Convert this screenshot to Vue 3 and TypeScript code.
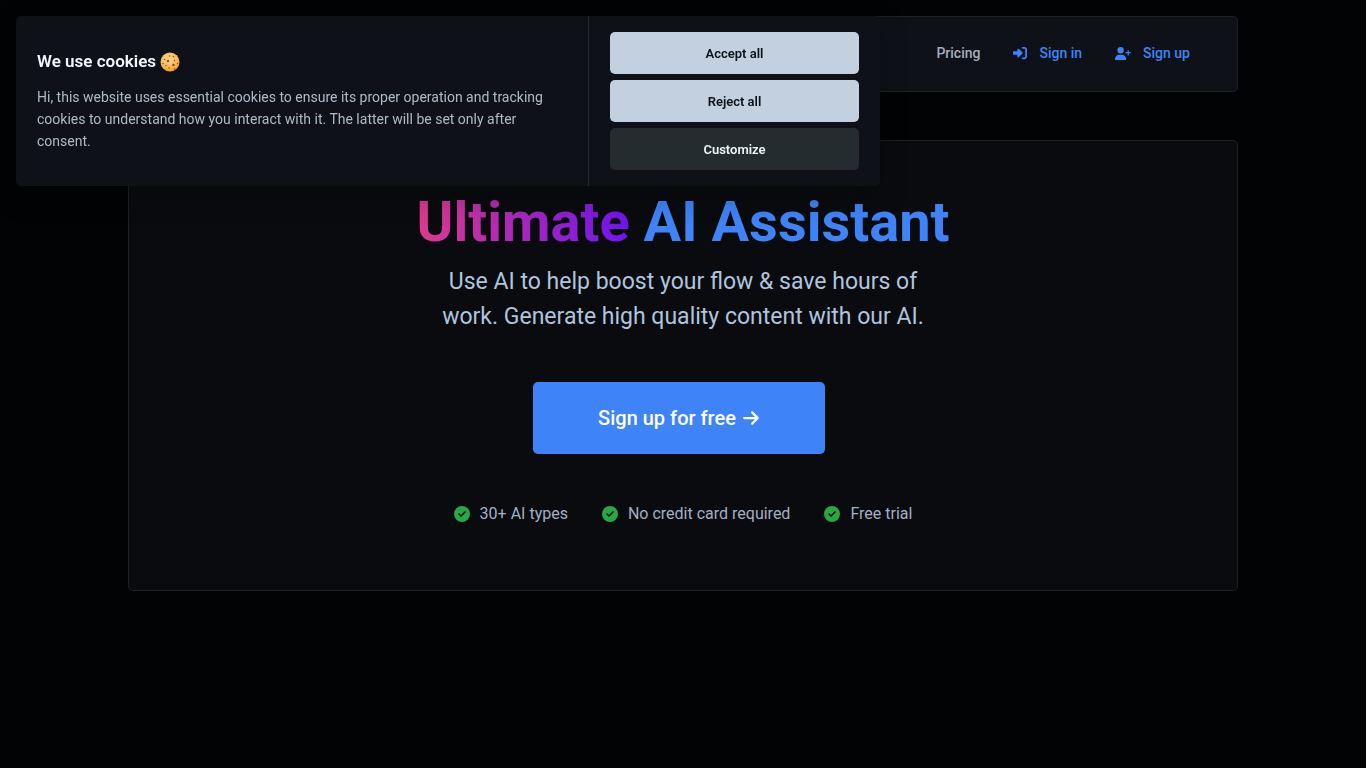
<script setup lang="ts">
import { ref } from 'vue'

const showConsent = ref(true)
const features: string[] = ['30+ AI types', 'No credit card required', 'Free trial']

function closeConsent(): void {
  showConsent.value = false
}
</script>

<template>
  <div class="page">
    <header class="navbar">
      <nav class="nav-links" aria-label="Main">
        <a class="nav-link" href="#pricing">Pricing</a>
        <a class="nav-link accent" href="#login">
          <svg class="icon-in" viewBox="0 0 512 512" aria-hidden="true">
            <path d="M217.9 105.9L340.7 228.7c7.2 7.2 11.3 17.1 11.3 27.3s-4.1 20.1-11.3 27.3L217.9 406.1c-6.4 6.4-15 9.9-24 9.9c-18.7 0-33.9-15.2-33.9-33.9l0-62.1L32 320c-17.7 0-32-14.3-32-32l0-64c0-17.7 14.3-32 32-32l128 0 0-62.1c0-18.7 15.2-33.9 33.9-33.9c9 0 17.6 3.6 24 9.9zM352 416l64 0c17.7 0 32-14.3 32-32l0-256c0-17.7-14.3-32-32-32l-64 0c-17.7 0-32-14.3-32-32s14.3-32 32-32l64 0c53 0 96 43 96 96l0 256c0 53-43 96-96 96l-64 0c-17.7 0-32-14.3-32-32s14.3-32 32-32z" />
          </svg>
          Sign in
        </a>
        <a class="nav-link accent" href="#register">
          <svg class="icon-up" viewBox="0 0 640 512" aria-hidden="true">
            <path d="M96 128a128 128 0 1 1 256 0A128 128 0 1 1 96 128zM0 482.3C0 383.8 79.8 304 178.3 304l91.4 0C368.2 304 448 383.8 448 482.3c0 16.4-13.3 29.7-29.7 29.7L29.7 512C13.3 512 0 498.7 0 482.3zM504 312l0-64-64 0c-13.3 0-24-10.7-24-24s10.7-24 24-24l64 0 0-64c0-13.3 10.7-24 24-24s24 10.7 24 24l0 64 64 0c13.3 0 24 10.7 24 24s-10.7 24-24 24l-64 0 0 64c0 13.3-10.7 24-24 24s-24-10.7-24-24z" />
          </svg>
          Sign up
        </a>
      </nav>
    </header>

    <main class="hero">
      <h1 class="title"><span class="gradient">Ultimate</span> AI Assistant</h1>
      <p class="subtitle">Use AI to help boost your flow &amp; save hours of work. Generate high quality content with our AI.</p>
      <a class="cta" href="#register">
        Sign up for free
        <svg viewBox="0 0 448 512" aria-hidden="true">
          <path d="M438.6 278.6c12.5-12.5 12.5-32.8 0-45.3l-160-160c-12.5-12.5-32.8-12.5-45.3 0s-12.5 32.8 0 45.3L338.8 224 32 224c-17.7 0-32 14.3-32 32s14.3 32 32 32l306.7 0L233.4 393.4c-12.5 12.5-12.5 32.8 0 45.3s32.8 12.5 45.3 0l160-160z" />
        </svg>
      </a>
      <ul class="features">
        <li v-for="feature in features" :key="feature">
          <svg viewBox="0 0 512 512" aria-hidden="true">
            <path d="M256 512A256 256 0 1 0 256 0a256 256 0 1 0 0 512zM369 209L241 337c-9.4 9.4-24.6 9.4-33.9 0l-64-64c-9.4-9.4-9.4-24.6 0-33.9s24.6-9.4 33.9 0l47 47L335 175c9.4-9.4 24.6-9.4 33.9 0s9.4 24.6 0 33.9z" />
          </svg>
          {{ feature }}
        </li>
      </ul>
    </main>

    <section v-if="showConsent" class="consent" role="dialog" aria-labelledby="consent-title">
      <div class="consent-text">
        <h2 id="consent-title">
          We use cookies
          <svg viewBox="0 0 40 40" role="img" aria-label="cookie">
            <defs>
              <radialGradient id="dough" cx="45%" cy="35%" r="65%">
                <stop offset="0" stop-color="#ffd587" />
                <stop offset="0.65" stop-color="#fcbc58" />
                <stop offset="1" stop-color="#ee9a3c" />
              </radialGradient>
            </defs>
            <circle cx="20" cy="20" r="19" fill="url(#dough)" />
            <g fill="#9a4a20">
              <circle cx="19" cy="8" r="1.5" />
              <circle cx="27" cy="9" r="1.5" />
              <circle cx="9" cy="15" r="1.5" />
              <circle cx="16" cy="18" r="2.5" />
              <circle cx="29" cy="17" r="1.5" />
              <circle cx="6" cy="23" r="1.5" />
              <circle cx="12" cy="27" r="1.5" />
              <circle cx="27" cy="26" r="2.5" />
              <circle cx="35" cy="23" r="1.5" />
              <circle cx="18" cy="32" r="1.5" />
              <circle cx="29" cy="34" r="1.5" />
            </g>
          </svg>
        </h2>
        <p>Hi, this website uses essential cookies to ensure its proper operation and tracking cookies to understand how you interact with it. The latter will be set only after consent.</p>
      </div>
      <div class="consent-actions">
        <button type="button" @click="closeConsent">Accept all</button>
        <button type="button" @click="closeConsent">Reject all</button>
        <button type="button" class="secondary">Customize</button>
      </div>
    </section>
  </div>
</template>

<style>
body {
  background: #020305;
}
</style>

<style scoped>
.page {
  box-sizing: border-box;
  max-width: 1142px;
  margin: 0 auto;
  padding: 16px;
  font-family: Roboto, "Liberation Sans", sans-serif;
  color: #b0c4de;
}

.navbar {
  display: flex;
  justify-content: flex-end;
  box-sizing: border-box;
  min-height: 76px;
  padding: 24px 47px;
  background: #0e1218;
  border: 1px solid #1d2124;
  border-radius: 5px;
}

.nav-links {
  display: flex;
  gap: 33px;
  height: 24px;
}

.nav-link {
  display: flex;
  align-items: center;
  color: #a6adba;
  font-size: 14px;
  font-weight: 500;
  line-height: 24px;
  text-decoration: none;
}

.accent {
  color: #3e83f7;
}

.nav-link svg {
  fill: currentColor;
  margin-right: 12px;
}

.icon-in {
  width: 14px;
  height: 14px;
}

.icon-up {
  width: 16px;
  height: 13px;
}

.hero {
  display: flex;
  flex-direction: column;
  align-items: center;
  margin-top: 48px;
  padding: 47px 48px 64px;
  background: #090b0f;
  border: 1px solid #1d2124;
  border-radius: 5px;
  text-align: center;
}

.title {
  margin: 0 0 8px;
  font-size: 56px;
  font-weight: 700;
  line-height: 68px;
  color: #3e83f7;
}

.gradient {
  background: linear-gradient(to right, #dd3a8c, #6f14ee);
  background-clip: text;
  -webkit-background-clip: text;
  color: transparent;
}

.subtitle {
  max-width: 500px;
  margin: 0;
  font-size: 23px;
  line-height: 35px;
}

.cta {
  display: flex;
  align-items: center;
  gap: 7px;
  box-sizing: border-box;
  height: 72px;
  margin: 48px 8px 48px 0;
  padding: 0 66px 0 65px;
  background: #3e83f7;
  border-radius: 5px;
  color: #ffffff;
  font-size: 20px;
  font-weight: 500;
  text-decoration: none;
}

.cta svg {
  width: 16px;
  height: 18px;
  fill: currentColor;
}

.features {
  display: flex;
  gap: 34px;
  margin: 0;
  padding: 0;
  list-style: none;
  color: #a3b0c4;
  font-size: 16px;
  line-height: 24px;
}

.features li {
  display: flex;
  align-items: center;
}

.features svg {
  width: 16px;
  height: 16px;
  margin-right: 10px;
  fill: #29a745;
}

.consent {
  position: fixed;
  top: 16px;
  left: 16px;
  display: flex;
  width: calc(100% - 32px);
  max-width: 864px;
  background: #0e1218;
  border-radius: 5px;
  box-shadow: 0 10px 28px rgba(2, 2, 3, 0.28);
}

.consent-text {
  display: flex;
  flex: 1;
  flex-direction: column;
  justify-content: center;
  padding: 16px 21px;
}

.consent-text h2 {
  display: flex;
  align-items: center;
  gap: 4px;
  margin: 0 0 13px;
  color: #f3f7fb;
  font-size: 17px;
  font-weight: 600;
  line-height: 23px;
}

.consent-text h2 svg {
  width: 20px;
  height: 20px;
}

.consent-text p {
  margin: 0;
  color: #aebbc5;
  font-size: 14px;
  line-height: 22px;
}

.consent-actions {
  display: flex;
  flex-direction: column;
  gap: 6px;
  box-sizing: border-box;
  width: 292px;
  padding: 16px 21px;
  border-left: 1px solid #222a2d;
}

.consent-actions button {
  height: 42px;
  border: 0;
  border-radius: 5px;
  background: #c2d0e0;
  color: #0b1119;
  font-family: inherit;
  font-size: 13px;
  font-weight: 600;
  cursor: pointer;
}

.consent-actions .secondary {
  background: #242c2f;
  color: #eff4f6;
}
</style>
